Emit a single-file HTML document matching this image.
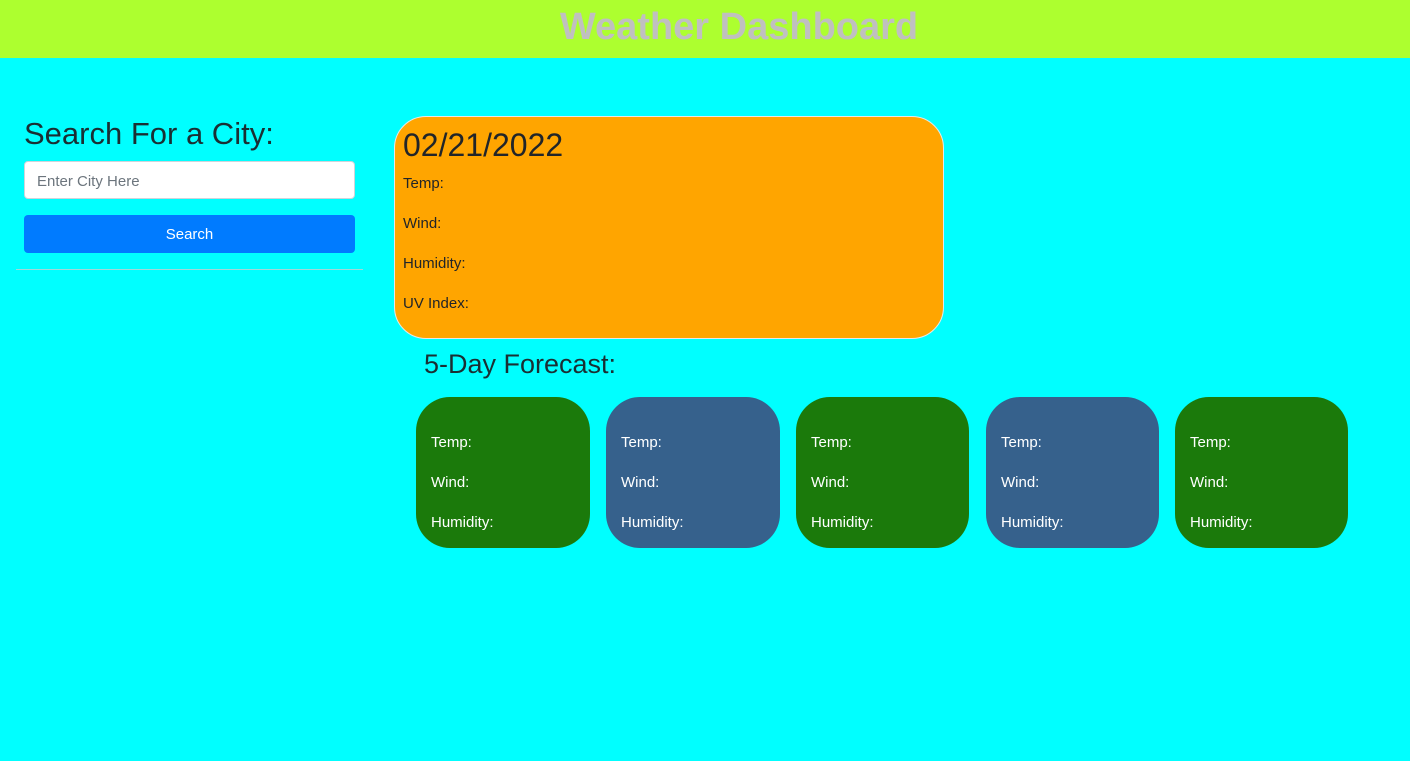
<!DOCTYPE html>
<html><head><style>
*{box-sizing:border-box;margin:0;padding:0}
body{width:1410px;height:761px;background:#00ffff;font-family:"Liberation Sans",sans-serif;position:relative;overflow:hidden;color:#212529}
.a{position:absolute}
header{position:absolute;left:0;top:0;width:1410px;height:58px;background:#adff2f;text-align:center}
header h1{font-size:38px;font-weight:bold;color:#c0c0c0;line-height:54px;padding-left:68px;letter-spacing:0px}
.t{font-size:15px}
.card{position:absolute;top:397px;height:151px;border-radius:34px;color:#fff;font-size:15px}
.card div{position:absolute;left:15px}
.g{background:#1b7a0b}.b{background:#36618c}
</style></head><body>
<header><h1>Weather Dashboard</h1></header>
<div class="a" style="left:24px;top:116px;font-size:31px;color:#1a2f33">Search For a City:</div>
<div class="a" style="left:24px;top:161px;width:331px;height:38px;background:#fff;border-radius:4px;border:1px solid #ced4da;padding:11px 12px;font-size:15px;color:#6c757d">Enter City Here</div>
<div class="a" style="left:24px;top:215px;width:331px;height:38px;background:#007bff;border-radius:4px;color:#fff;font-size:15px;text-align:center;line-height:40px">Search</div>
<div class="a" style="left:16px;top:269px;width:347px;height:1px;background:#a0d8d8"></div>
<div class="a" style="left:394px;top:116px;width:550px;height:223px;background:#ffa500;border:1px solid #e8e8e8;border-radius:32px">
<div class="a" style="left:8px;top:10px;font-size:32px">02/21/2022</div>
<div class="a t" style="left:8px;top:58px">Temp:</div>
<div class="a t" style="left:8px;top:98px">Wind:</div>
<div class="a t" style="left:8px;top:138px">Humidity:</div>
<div class="a t" style="left:8px;top:178px">UV Index:</div>
</div>
<div class="a" style="left:424px;top:349px;font-size:27px;color:#1a2f33">5-Day Forecast:</div>
<div class="card g" style="left:416px;width:174px"><div style="top:37px">Temp:</div><div style="top:77px">Wind:</div><div style="top:117px">Humidity:</div></div>
<div class="card b" style="left:606px;width:174px"><div style="top:37px">Temp:</div><div style="top:77px">Wind:</div><div style="top:117px">Humidity:</div></div>
<div class="card g" style="left:796px;width:173px"><div style="top:37px">Temp:</div><div style="top:77px">Wind:</div><div style="top:117px">Humidity:</div></div>
<div class="card b" style="left:986px;width:173px"><div style="top:37px">Temp:</div><div style="top:77px">Wind:</div><div style="top:117px">Humidity:</div></div>
<div class="card g" style="left:1175px;width:173px"><div style="top:37px">Temp:</div><div style="top:77px">Wind:</div><div style="top:117px">Humidity:</div></div>
</body></html>
